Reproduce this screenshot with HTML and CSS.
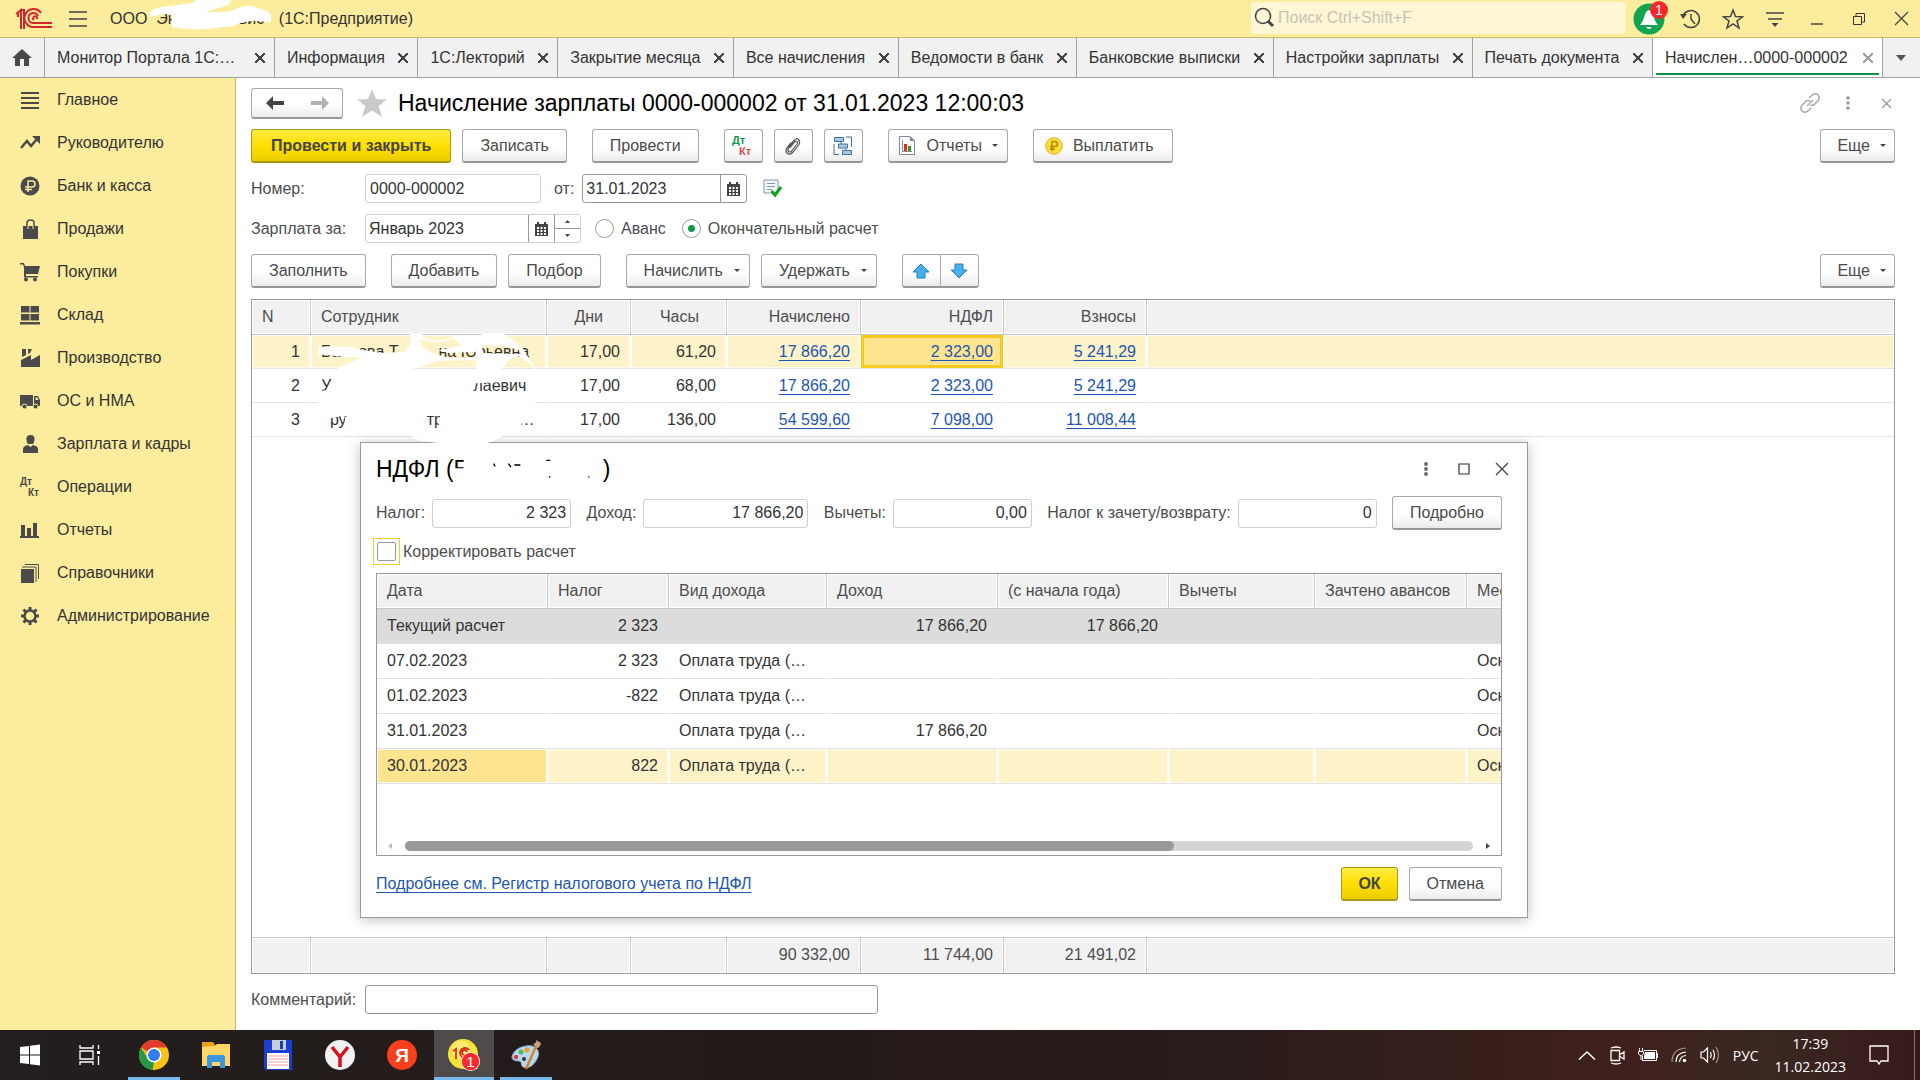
FILE: index.html
```html
<!DOCTYPE html>
<html lang="ru">
<head>
    <meta charset="utf-8">
    <title>Начисление зарплаты</title>
    <link rel="stylesheet" href="styles.css">
</head>
<body>

<div class="titlebar">
    <svg class="logo" width="38" height="22" viewBox="0 0 38 22" fill="none" stroke="#d8232a" stroke-width="2">
        <path d="M1 6 L6 2 V21 M3 9 V5 M9 1 V21 M5 2 H9"/>
        <path d="M26 5 A9 9 0 1 0 19 19 H37 M23 8 A5 5 0 1 0 19 15 H37 M22 11 A2 2 0 1 0 19 12"/>
    </svg>
    <button class="icon-btn" aria-label="Меню">
        <svg width="18" height="16" viewBox="0 0 18 16" stroke="#444" stroke-width="1.5"><path d="M0 1H18M0 8H18M0 15H18"/></svg>
    </button>
    <span class="app-name">ООО  Эн              вис"  (1С:Предприятие)</span>
    <label class="search">
        <svg width="20" height="21" viewBox="0 0 20 21" fill="none" stroke="#444"><circle cx="9" cy="9" r="7.5" stroke-width="1.5"/><path d="M14 14L19 19" stroke-width="3"/></svg>
        <input type="text" placeholder="Поиск Ctrl+Shift+F">
    </label>
    <div class="title-buttons">
        <button class="icon-btn bell" aria-label="Уведомления">
            <svg width="32" height="32" viewBox="0 0 32 32"><circle cx="16" cy="16" r="15.5" fill="#12a451"/><path d="M16 7c-5 1-4 10-9 15H25C20 17 21 8 16 7zM13 24H19Q16 28 13 24z" fill="#fff"/></svg>
            <span class="badge">1</span>
        </button>
        <button class="icon-btn" aria-label="История">
            <svg width="22" height="22" viewBox="0 0 22 22" fill="none" stroke="#444" stroke-width="1.5"><path d="M3 8A8.500 8.500 0 1 1 4 16"/><path d="M11 6V11L15 16"/><path d="M0 6L7 6L3 11z" fill="#444" stroke="none"/></svg>
        </button>
        <button class="icon-btn" aria-label="Избранное">
            <svg width="22" height="22" viewBox="0 0 22 22" fill="none" stroke="#444" stroke-width="1.500"><path d="M11 2L13.500 8.500L20.500 8.800L15 13L17 20L11 16L5 20L7 13L1.500 8.800L8.500 8.500z"/></svg>
        </button>
        <button class="icon-btn" aria-label="Сервис">
            <svg width="20" height="20" viewBox="0 0 20 20" stroke="#444" stroke-width="1.500"><path d="M1 4H19M3 10H17"/><path d="M6.500 14H13.500L10 18z" fill="#444" stroke="none"/></svg>
        </button>
        <button class="icon-btn" aria-label="Свернуть">
            <svg width="12" height="12" viewBox="0 0 12 12" stroke="#444" stroke-width="1.500"><path d="M0 11H12"/></svg>
        </button>
        <button class="icon-btn" aria-label="Развернуть">
            <svg width="12" height="12" viewBox="0 0 12 12" fill="none" stroke="#333"><path d="M.5 3.500H8.500V11.500H.5zM3 3.500V.5H11.500V9H8.500"/></svg>
        </button>
        <button class="icon-btn" aria-label="Закрыть">
            <svg width="13" height="13" viewBox="0 0 13 13" stroke="#444" stroke-width="1.300"><path d="M0 0L13 13M13 0L0 13"/></svg>
        </button>
    </div>
    <!-- white paint over the company name -->
    <svg class="paint paint-title" width="290" height="38" viewBox="0 0 870 114" fill="#fff">
        <path d="M448 50 Q446 28 480 22 L575 10 L590 0 H692 Q696 12 670 20 L615 36 Q690 40 716 24 Q745 10 775 24 L808 36 Q816 50 812 66 L760 62 Q715 68 700 78 L620 87 Q560 90 516 82 Q510 60 520 46 L500 42 Z"/>
    </svg>
</div>

<div class="tabs">
    <button class="tab-home" aria-label="Начальная страница">
        <svg width="20" height="17" viewBox="0 0 20 17" fill="#4a4a4a"><path d="M10 0L20 9H17V17H12V10H8V17H3V9H0z"/></svg>
    </button>
    <div class="tab tab-wide"><span>Монитор Портала 1С:…</span><button class="tab-x" aria-label="Закрыть"></button></div>
    <div class="tab"><span>Информация</span><button class="tab-x" aria-label="Закрыть"></button></div>
    <div class="tab"><span>1С:Лекторий</span><button class="tab-x" aria-label="Закрыть"></button></div>
    <div class="tab"><span>Закрытие месяца</span><button class="tab-x" aria-label="Закрыть"></button></div>
    <div class="tab"><span>Все начисления</span><button class="tab-x" aria-label="Закрыть"></button></div>
    <div class="tab"><span>Ведомости в банк</span><button class="tab-x" aria-label="Закрыть"></button></div>
    <div class="tab"><span>Банковские выписки</span><button class="tab-x" aria-label="Закрыть"></button></div>
    <div class="tab"><span>Настройки зарплаты</span><button class="tab-x" aria-label="Закрыть"></button></div>
    <div class="tab"><span>Печать документа</span><button class="tab-x" aria-label="Закрыть"></button></div>
    <div class="tab tab-wide tab-active"><span>Начислен…0000-000002</span><button class="tab-x" aria-label="Закрыть"></button></div>
    <button class="tab-more" aria-label="Все вкладки"><svg width="10" height="6" viewBox="0 0 10 6" fill="#555"><path d="M0 0H10L5 6z"/></svg></button>
</div>

<div class="workspace">
<nav class="sidebar">
    <a href="#"><svg viewBox="0 0 20 20" stroke="#4a4a4a" stroke-width="2.200"><path d="M1 3H19M1 8H19M1 13H19M1 18H19"/></svg>Главное</a>
    <a href="#"><svg viewBox="0 0 20 20" fill="none" stroke="#4a4a4a" stroke-width="2.500"><path d="M1 15L7 8L11 13L17 6"/><path d="M12 3H20V11z" fill="#4a4a4a" stroke="none"/></svg>Руководителю</a>
    <a href="#"><svg viewBox="0 0 20 20" fill="none" stroke="#fbec9e" stroke-width="1.500"><circle cx="10" cy="10" r="9.500" fill="#4a4a4a" stroke="none"/><path d="M8 16V5H12A3 3 0 0 1 12 11H5M5 13.500H12"/></svg>Банк и касса</a>
    <a href="#"><svg viewBox="0 0 20 20" fill="none" stroke="#4a4a4a" stroke-width="1.500"><path d="M3 7H18V20H3z" fill="#4a4a4a" stroke="none"/><path d="M7 8V4Q7 1 10.500 1T14 4V8"/><path d="M8 7V10M13 7V10" stroke="#fbec9e" stroke-width="1"/></svg>Продажи</a>
    <a href="#"><svg viewBox="0 0 20 20" fill="#4a4a4a"><path d="M0 1H4L5 4H20L18 12H6V14H18V15.500H4V5L3 2.500H0z"/><circle cx="6" cy="17.500" r="2"/><circle cx="15" cy="17.500" r="2"/></svg>Покупки</a>
    <a href="#"><svg viewBox="0 0 20 20" fill="#4a4a4a"><path d="M1 1H9.500V7.500H1zM10.500 1H19V7.500H10.500zM1 9H9.500V15.500H1zM10.500 9H19V15.500H10.500zM0 17H20V19.500H0z"/></svg>Склад</a>
    <a href="#"><svg viewBox="0 0 20 20" fill="#4a4a4a"><path d="M1 12L11 7V12L20 7V19H1zM2 1H6V7L2 9zM8 1H12L10 5L8 6z"/></svg>Производство</a>
    <a href="#"><svg viewBox="0 0 20 20" fill="#4a4a4a"><path d="M0 4H13V15H0z"/><path d="M14 5H18L20 9V15H14z"/><path d="M15.500 6.500H17.500L18.500 9H15.500z" fill="#fbec9e"/><circle cx="4.500" cy="15.500" r="2.500" stroke="#fbec9e"/><circle cx="15.500" cy="15.500" r="2.500" stroke="#fbec9e"/></svg>ОС и НМА</a>
    <a href="#"><svg viewBox="0 0 20 20" fill="#4a4a4a"><path d="M10.500 1C16 1 15 7 13 10H8C6 7 5 1 10.500 1zM3 19V15Q3 12 8 11L10.500 13L13 11Q18 12 18 15V19z"/></svg>Зарплата и кадры</a>
    <a href="#"><svg viewBox="0 0 20 20" fill="#4a4a4a" font-size="10" font-weight="bold"><text x="0" y="8">Дт</text><text x="8" y="19">Кт</text></svg>Операции</a>
    <a href="#"><svg viewBox="0 0 20 20" fill="#4a4a4a"><path d="M1 16V5H5V16H7V8H11V16H13V3H17V16H19V18H0V16z"/></svg>Отчеты</a>
    <a href="#"><svg viewBox="0 0 20 20" fill="none" stroke="#4a4a4a"><path d="M1 6H14V20H1z" fill="#4a4a4a" stroke="none"/><path d="M2 4H16V19M5 1.500H18.500V16"/></svg>Справочники</a>
    <a href="#"><svg viewBox="0 0 20 20" fill="none" stroke="#4a4a4a"><circle cx="10" cy="10" r="5.500" stroke-width="2.500"/><path d="M10 1V4M10 16V19M1 10H4M16 10H19M3.500 3.500L6 6M14 14L16.500 16.500M3.500 16.500L6 14M14 6L16.500 3.500" stroke-width="3"/></svg>Администрирование</a>
</nav>

<main class="main">
    <div class="form-head">
        <div class="btn-pair">
            <button class="btn" aria-label="Назад"><svg width="18" height="14" viewBox="0 0 18 14" fill="#444"><path d="M0 7L7 0V5H18V9H7V14z"/></svg></button>
            <button class="btn" aria-label="Вперед"><svg width="18" height="14" viewBox="0 0 18 14" fill="#b0b0b0"><path d="M18 7L11 0V5H0V9H11V14z"/></svg></button>
        </div>
        <svg class="star" width="30" height="28" viewBox="0 0 30 28" fill="#c9cacc"><path d="M15 0L19 10L30 10.500L21.500 17L25 28L15 21.500L5 28L8.500 17L0 10.500L11 10z"/></svg>
        <h1>Начисление зарплаты 0000-000002 от 31.01.2023 12:00:03</h1>
        <div class="form-tools">
            <button class="icon-btn" aria-label="Ссылка"><svg width="20" height="20" viewBox="0 0 20 20" fill="none" stroke="#aaa" stroke-width="1.500"><path d="M9 5L13 1.500Q16 0 18 2T18.500 7L14.500 11.500Q12 13 10 12M11 15L7 18.500Q4 20 2 18T1.500 13L5.500 8.500Q8 7 10 8M7 13L13 7"/></svg></button>
            <button class="icon-btn" aria-label="Действия"><svg width="4" height="14" viewBox="0 0 4 14" fill="#999"><circle cx="2" cy="2" r="1.800"/><circle cx="2" cy="7" r="1.800"/><circle cx="2" cy="12" r="1.800"/></svg></button>
            <button class="icon-btn" aria-label="Закрыть"><svg width="9" height="9" viewBox="0 0 9 9" stroke="#999" stroke-width="1.300"><path d="M0 0L9 9M9 0L0 9"/></svg></button>
        </div>
    </div>

    <div class="commands">
        <button class="btn btn-main btn-post">Провести и закрыть</button>
        <button class="btn">Записать</button>
        <button class="btn btn-group">Провести</button>
        <button class="btn btn-icon btn-group" aria-label="Дт Кт"><svg width="22" height="20" viewBox="0 0 22 20" font-size="11" font-weight="bold"><text x="0" y="8" fill="#0f9a4c">Дт</text><text x="7" y="19" fill="#e04848">Кт</text></svg></button>
        <button class="btn btn-icon" aria-label="Файлы"><svg width="18" height="20" viewBox="0 0 18 20" fill="none" stroke="#555" stroke-width="1.200"><path d="M5.500 12L10.500 6Q12 4.500 13 5.500T13 8L8 14.500Q6 17 4.500 15.500T4.500 11.500L10 4.500Q12.500 1.500 14.500 3.500T15 8.500L9 16Q6 19.500 3.500 17.500T2.500 12.500L7 6.500"/></svg></button>
        <button class="btn btn-icon" aria-label="Структура"><svg width="20" height="20" viewBox="0 0 20 20" fill="#a9c7dc" stroke="#3f75a0"><path d="M1.500 1.500H10.500V5.500H1.500zM5.500 8H14.500V12H5.500zM9.500 14.500H18.500V18.500H9.500z"/><path d="M13 1H18.500V11M1 8V18.500H6M8 6V8M13 12V14" fill="none"/></svg></button>
        <button class="btn btn-group btn-reports"><svg width="16" height="19" viewBox="0 0 16 19"><path d="M.5.5H11L15.500 5V18.500H.5z" fill="#fff" stroke="#7a8a99"/><path d="M11 0V5H16z" fill="#7a8a99"/><path d="M3.500 4V15.500H13" fill="none" stroke="#888"/><path d="M5 8H8V15H5z" fill="#e03020"/><path d="M9 10H12V15H9z" fill="#3a9a20"/></svg>Отчеты<i class="caret"></i></button>
        <button class="btn btn-group btn-pay"><svg width="18" height="18" viewBox="0 0 18 18" fill="none" stroke="#b58a00" stroke-width="1.500"><circle cx="9" cy="9" r="8.300" fill="#fcdc3c" stroke="#e3b320" stroke-width="1"/><path d="M7 14V4.500H10A2.500 2.500 0 0 1 10 9.500H5M5 12H10"/></svg>Выплатить</button>
        <button class="btn btn-more">Еще<i class="caret"></i></button>
    </div>

    <div class="fields">
        <label class="lbl" for="num">Номер:</label>
        <input class="inp inp-num" id="num" type="text" value="0000-000002">
        <label class="lbl-from" for="date">от:</label>
        <div class="combo combo-dark">
            <input id="date" class="inp-date" type="text" value="31.01.2023">
            <button class="cal" aria-label="Календарь"><svg width="13" height="14" viewBox="0 0 13 14" fill="#444"><path d="M0 2H2V0H4V2H9V0H11V2H13V14H0z"/><path d="M2 5H4V7H2zM5.500 5H7.500V7H5.500zM9 5H11V7H9zM2 8H4V10H2zM5.500 8H7.500V10H5.500zM9 8H11V10H9zM2 11H4V13H2zM5.500 11H7.500V13H5.500zM9 11H11V13H9z" fill="#fff"/></svg></button>
        </div>
        <svg class="posted" width="19" height="19" viewBox="0 0 19 19" fill="none"><path d="M1 1H15V14H1z" fill="#f4f7fb" stroke="#8295b5"/><path d="M4 4.500H12M4 7.500H12M4 10.500H9" stroke="#8295b5"/><path d="M8.500 12L12 16L18 8" stroke="#15a01c" stroke-width="3"/></svg>
    </div>

    <div class="fields">
        <label class="lbl" for="month">Зарплата за:</label>
        <div class="combo">
            <input id="month" class="inp-month" type="text" value="Январь 2023">
            <button class="cal" aria-label="Календарь"><svg width="13" height="14" viewBox="0 0 13 14" fill="#444"><path d="M0 2H2V0H4V2H9V0H11V2H13V14H0z"/><path d="M2 5H4V7H2zM5.500 5H7.500V7H5.500zM9 5H11V7H9zM2 8H4V10H2zM5.500 8H7.500V10H5.500zM9 8H11V10H9zM2 11H4V13H2zM5.500 11H7.500V13H5.500zM9 11H11V13H9z" fill="#fff"/></svg></button>
            <div class="spin">
                <button aria-label="Больше"><svg width="5" height="3" viewBox="0 0 5 3" fill="#444"><path d="M0 3H5L2.500 0z"/></svg></button>
                <button aria-label="Меньше"><svg width="5" height="3" viewBox="0 0 5 3" fill="#444"><path d="M0 0H5L2.500 3z"/></svg></button>
            </div>
        </div>
        <label class="radio"><input type="radio" name="kind">Аванс</label>
        <label class="radio"><input type="radio" name="kind" checked>Окончательный расчет</label>
    </div>

    <div class="commands">
        <button class="btn">Заполнить</button>
        <button class="btn btn-group">Добавить</button>
        <button class="btn">Подбор</button>
        <button class="btn btn-group btn-drop">Начислить<i class="caret"></i></button>
        <button class="btn btn-drop">Удержать<i class="caret"></i></button>
        <div class="btn-pair btn-group">
            <button class="btn" aria-label="Вверх"><svg width="18" height="16" viewBox="0 0 18 16" fill="#45b0ee" stroke="#2a7fb5"><path d="M9 1L17 9H13V15H5V9H1z"/></svg></button>
            <button class="btn" aria-label="Вниз"><svg width="18" height="16" viewBox="0 0 18 16" fill="#45b0ee" stroke="#2a7fb5"><path d="M9 15L17 7H13V1H5V7H1z"/></svg></button>
        </div>
        <button class="btn btn-more">Еще<i class="caret"></i></button>
    </div>

    <div class="grid-box">
    <table class="grid">
        <colgroup><col class="c-n"><col class="c-name"><col class="c-days"><col class="c-hours"><col class="c-acc"><col class="c-tax"><col class="c-tax"><col></colgroup>
        <thead>
            <tr><th>N</th><th>Сотрудник</th><th class="num-wide">Дни</th><th class="num-wide">Часы</th><th class="num">Начислено</th><th class="num">НДФЛ</th><th class="num">Взносы</th><th></th></tr>
        </thead>
        <tbody>
            <tr class="current"><td class="num">1</td><td class="who">Ба    ова Т         на Юрьевна</td><td class="num">17,00</td><td class="num">61,20</td><td class="num"><a href="#">17 866,20</a></td><td class="num picked"><a href="#">2 323,00</a></td><td class="num"><a href="#">5 241,29</a></td><td></td></tr>
            <tr><td class="num">2</td><td class="who">У                                лаевич</td><td class="num">17,00</td><td class="num">68,00</td><td class="num"><a href="#">17 866,20</a></td><td class="num"><a href="#">2 323,00</a></td><td class="num"><a href="#">5 241,29</a></td><td></td></tr>
            <tr><td class="num">3</td><td class="who">  ру                  тр                 …</td><td class="num">17,00</td><td class="num">136,00</td><td class="num"><a href="#">54 599,60</a></td><td class="num"><a href="#">7 098,00</a></td><td class="num"><a href="#">11 008,44</a></td><td></td></tr>
            <tr class="filler"><td colspan="8"></td></tr>
        </tbody>
        <tfoot>
            <tr><td></td><td></td><td></td><td></td><td class="num">90 332,00</td><td class="num">11 744,00</td><td class="num">21 491,02</td><td></td></tr>
        </tfoot>
    </table>
    </div>

    <div class="fields">
        <label class="lbl" for="comment">Комментарий:</label>
        <input class="inp inp-comment" id="comment" type="text">
    </div>

    <section class="dialog" role="dialog">
        <div class="dialog-head">
            <h2>НДФЛ (Б                     )</h2>
            <button class="icon-btn" aria-label="Действия"><svg width="4" height="14" viewBox="0 0 4 14" fill="#666"><circle cx="2" cy="2" r="1.900"/><circle cx="2" cy="7" r="1.900"/><circle cx="2" cy="12" r="1.900"/></svg></button>
            <button class="icon-btn" aria-label="Развернуть"><svg width="12" height="12" viewBox="0 0 12 12" fill="none" stroke="#333" stroke-width="1.200"><path d="M1 1H11V11H1z"/></svg></button>
            <button class="icon-btn" aria-label="Закрыть"><svg width="14" height="14" viewBox="0 0 14 14" stroke="#444" stroke-width="1.300"><path d="M1 1L13 13M13 1L1 13"/></svg></button>
        </div>
        <div class="dialog-fields">
            <label>Налог: <input class="inp inp-s" type="text" value="2 323"></label>
            <label>Доход: <input class="inp inp-m" type="text" value="17 866,20"></label>
            <label>Вычеты: <input class="inp inp-s" type="text" value="0,00"></label>
            <label>Налог к зачету/возврату: <input class="inp inp-s" type="text" value="0"></label>
            <button class="btn">Подробно</button>
        </div>
        <label class="check"><span><input type="checkbox"></span>Корректировать расчет</label>

        <div class="sub-box">
        <table class="grid sub">
            <colgroup><col class="d-date"><col class="d-tax"><col class="d-kind"><col class="d-sum"><col class="d-sum"><col class="d-ded"><col class="d-adv"><col class="d-place"></colgroup>
            <thead>
                <tr><th>Дата</th><th>Налог</th><th>Вид дохода</th><th>Доход</th><th>(с начала года)</th><th>Вычеты</th><th>Зачтено авансов</th><th>Место</th></tr>
            </thead>
            <tbody>
                <tr class="total"><td>Текущий расчет</td><td class="num">2 323</td><td></td><td class="num">17 866,20</td><td class="num">17 866,20</td><td></td><td></td><td></td></tr>
                <tr><td>07.02.2023</td><td class="num">2 323</td><td>Оплата труда (…</td><td></td><td></td><td></td><td></td><td>Основное</td></tr>
                <tr><td>01.02.2023</td><td class="num">-822</td><td>Оплата труда (…</td><td></td><td></td><td></td><td></td><td>Основное</td></tr>
                <tr><td>31.01.2023</td><td></td><td>Оплата труда (…</td><td class="num">17 866,20</td><td></td><td></td><td></td><td>Основное</td></tr>
                <tr class="current"><td class="picked-plain">30.01.2023</td><td class="num">822</td><td>Оплата труда (…</td><td></td><td></td><td></td><td></td><td>Основное</td></tr>
            </tbody>
        </table>
        <div class="scroll">
            <svg width="4" height="6" viewBox="0 0 4 6" fill="#bbb"><path d="M4 0V6L0 3z"/></svg>
            <div class="track"><div class="thumb"></div></div>
            <svg width="4" height="6" viewBox="0 0 4 6" fill="#444"><path d="M0 0V6L4 3z"/></svg>
        </div>
        </div>

        <div class="dialog-foot">
            <a href="#">Подробнее см. Регистр налогового учета по НДФЛ</a>
            <button class="btn btn-main">ОК</button>
            <button class="btn">Отмена</button>
        </div>
    </section>

    <!-- white paint over the names -->
    <svg class="paint paint-names" width="310" height="160" viewBox="0 0 930 480" fill="#fff">
        <path fill-rule="evenodd" d="M40 65H130L170 74L230 84L300 80L318 58L315 26H351L353 36Q400 58 445 34L530 30V26H598L650 66L690 128L690 160L660 168L480 176V205L690 215V240L510 260L440 262L400 270L350 262L320 300L310 262H250L190 268L160 272L120 270L70 282L40 272L45 200L80 190L78 160L100 128L168 98L130 96L40 88z
            M345 44Q400 62 445 38L470 62L400 76L430 84L512 80V100L430 98L380 84L350 64z
            M532 60L600 64L640 74L650 88L532 84z
            M400 108L512 104V132H323z
            M620 98L642 94L684 124V132H590z"/>
        <path d="M120 275L160 282V310L120 305zM185 270H280V310H235L232 296H185zM315 270H350V300L345 310H310zM405 270L440 268L470 275L570 285V305L600 330Q560 350 545 356H425Q340 350 318 336L330 312H400zM575 265H680V282H650V310H580z"/>
        <path d="M40 180L46 150H52V240H40z"/>
        <path d="M444 430H482V470H444zM476 395H560V470H476z"/>
        <g stroke="#000" stroke-width="4"><path d="M566 416L570 424M610 416L618 426M628 420H646M724 406H736M732 456H736M850 456H853"/></g>
    </svg>
</main>
</div>

<footer class="taskbar">
    <button class="task" aria-label="Пуск"><svg width="20" height="22" viewBox="0 0 20 22" fill="#fff"><path d="M0 3L9 2V10.500H0zM10 1.800L20 .5V10.500H10zM0 11.500H9V20L0 19zM10 11.500H20V21.500L10 20.200z"/></svg></button>
    <button class="task" aria-label="Представление задач"><svg width="22" height="20" viewBox="0 0 22 20" fill="none" stroke="#fff" stroke-width="1.300"><path d="M1 0V3H14V0M1 6H14V14H1zM1 20V17H14V20M19.500 0V4M19.500 11V20"/><path d="M18 6H21V9H18z" fill="#fff" stroke="none"/></svg></button>
    <div class="apps">
    <button class="task run" aria-label="Chrome"><svg width="30" height="30" viewBox="0 0 30 30"><circle cx="15" cy="15" r="15" fill="#f9c116"/><path d="M15 15L2 7.500A15 15 0 0 1 28 7.500H15z" fill="#e23b2e"/><path d="M2 7.500L9 19L15 22L13.500 30A15 15 0 0 1 2 7.500z" fill="#279847"/><circle cx="15" cy="15" r="7.500" fill="#fff"/><circle cx="15" cy="15" r="6" fill="#2f7df0"/></svg></button>
    <button class="task" aria-label="Проводник"><svg width="28" height="26" viewBox="0 0 28 26"><path d="M0 0H11L13 3H28V24H0z" fill="#e8a317"/><path d="M0 5L13 4L15 2H28V24H0z" fill="#ffd667"/><path d="M5 26V15Q5 13 7 13H21Q23 13 23 15V26H18V20H10V26z" fill="#3a96dd"/></svg></button>
    <button class="task" aria-label="Total Commander"><svg width="28" height="30" viewBox="0 0 28 30"><path d="M0 0H28V30H2L0 28z" fill="#1a3fd0"/><path d="M8 0H22V10H8z" fill="#c8ccd8"/><path d="M16 1H19V9H16z" fill="#1a3fa0"/><path d="M3 13H25V29H3z" fill="#fff"/><path d="M4 16H24M4 19H24M4 22H24M4 25H24" stroke="#f0a0a0"/></svg></button>
    <button class="task" aria-label="Яндекс Браузер"><svg width="30" height="30" viewBox="0 0 30 30"><circle cx="15" cy="15" r="15" fill="#f2f2f2"/><path d="M7 7L15 17L23 7M15 16V27" fill="none" stroke="#d8101c" stroke-width="3.500"/></svg></button>
    <button class="task" aria-label="Яндекс"><svg width="30" height="30" viewBox="0 0 30 30"><circle cx="15" cy="15" r="15" fill="#fc3f1d"/><text x="15" y="22" text-anchor="middle" font-size="19" font-weight="bold" fill="#fff">Я</text></svg></button>
    <button class="task run active" aria-label="1С"><svg width="32" height="32" viewBox="0 0 32 32"><circle cx="15" cy="15" r="15" fill="#fbe23a"/><circle cx="13" cy="11" r="9" fill="#fdf08a" opacity=".7"/><path d="M5 12L8 10V20M21 11A5 5 0 1 0 17 19H22M19 13A2.500 2.500 0 1 0 17 16H22" fill="none" stroke="#e0301e" stroke-width="1.800"/><circle cx="22.500" cy="22.500" r="9.500" fill="#fff"/><circle cx="22.500" cy="22.500" r="8.700" fill="#fb2a2e"/><text x="22.500" y="28" text-anchor="middle" font-size="15" fill="#fff">1</text></svg></button>
    <button class="task run" aria-label="Paint"><svg width="30" height="30" viewBox="0 0 30 30"><path d="M15 6C26 4 30 12 26 19C22 27 16 29 12 27C9 25 12 22 8 21C4 21 1 20 1 17C2 11 8 7 15 6z" fill="#b5d9ee" stroke="#7fa8c4"/><circle cx="5" cy="17" r="2.200" fill="#e23a3a"/><circle cx="10" cy="12" r="2.500" fill="#4fb35a"/><circle cx="16" cy="10" r="2.500" fill="#f0a020"/><circle cx="13" cy="19" r="2" fill="#333"/><path d="M26 4L15 29" stroke="#d98324" stroke-width="2.500"/><path d="M22 4Q26 3 25 0L30 3Q29 8 26 8z" fill="#c9a077"/></svg></button>
    </div>
    <div class="tray">
        <svg class="tray-up" width="16" height="9" viewBox="0 0 16 9" fill="none" stroke="#fff" stroke-width="1.500"><path d="M0 8.500L8 1L16 8.500"/></svg>
        <svg width="15" height="19" viewBox="0 0 15 19" fill="none" stroke="#fff" stroke-width="1.300"><path d="M1 4.500H9.500V14.500H1zM10 8.500L14 6V13L10 10.500M1 2Q6 0 11 2M1 17Q6 19 11 17"/></svg>
        <svg width="20" height="14" viewBox="0 0 20 14" fill="none" stroke="#fff"><path d="M6 2.500H18.500V12.500H4.500V8M19.500 5V10M1.500 0V3M4.500 0V3M.5 3.500H5.500V6L3 8L.5 6zM3 8V12"/><path d="M7 4H17V11H6V8z" fill="#fff" stroke="none"/></svg>
        <svg width="16" height="16" viewBox="0 0 16 16" fill="none" stroke="#fff" stroke-width="1.200"><path d="M1 15Q1 2 15 1" opacity=".5"/><path d="M5 15Q5 6 15 5M8.500 15Q9 9 15 8.500"/><circle cx="13.500" cy="13.500" r="1.800" fill="#fff" stroke="none"/></svg>
        <svg width="20" height="18" viewBox="0 0 20 18" fill="none" stroke="#fff" stroke-width="1.200"><path d="M1 6H3.500L7.500 2V16L3.500 12H1zM10.500 6Q12 9 10.500 12M13 4Q16 9 13 14"/><path d="M16 1Q21 9 16 17" opacity=".5"/></svg>
        <span>РУС</span>
        <div class="clock">17:39<br>11.02.2023</div>
        <svg width="20" height="20" viewBox="0 0 20 20" fill="none" stroke="#fff" stroke-width="1.300"><path d="M1 1H19V16H12L10 19L8 16H1z"/></svg>
    </div>
</footer>

</body>
</html>
```
FILE: styles.css
```css
* {margin: 0; padding: 0; box-sizing: border-box;}

body {
    display: flex;
    flex-direction: column;
    height: 100vh;
    overflow: hidden;
    background: #fff;
    color: #333;
    font: 16px/20px "Liberation Sans", Arial, sans-serif;
}
button, input {font: inherit; color: inherit;}
button {border: 0; background: none; white-space: nowrap;}
svg {display: block; flex: none; overflow: visible;}
a {color: #1d56b0; text-underline-offset: 3px;}

/* title bar */
.titlebar {
    position: relative;
    display: flex;
    align-items: center;
    height: 38px;
    padding: 0 6px 0 15px;
    background: #fbec9e;
    border-bottom: 1px solid #c8b965;
}
.icon-btn {display: flex; align-items: center; justify-content: center; width: 26px; height: 26px; flex: none;}
.titlebar > .icon-btn {margin-left: 12px;}
.app-name {margin-left: 19px; white-space: pre;}
.search {
    display: flex;
    align-items: center;
    gap: 4px;
    width: 375px;
    height: 32px;
    margin: 0 10px 2px auto;
    padding-left: 3px;
    border-radius: 3px;
    background: #fef6d4;
}
.search input {flex: 1; border: 0; background: none; outline: 0;}
.search input::placeholder {color: #c6c4b8;}
.title-buttons {display: flex; gap: 16px;}
.bell {position: relative;}
.badge {
    position: absolute;
    left: 14px;
    top: -5px;
    width: 18px;
    height: 18px;
    border-radius: 50%;
    background: #f9262c;
    color: #fff;
    font-size: 14px;
    line-height: 18px;
}

/* tabs */
.tabs {display: flex; height: 40px; background: #f1f1f1; border-bottom: 1px solid #a0a0a0;}
.tab-home {display: flex; flex: none; align-items: center; justify-content: center; width: 45px; border-right: 1px solid #a0a0a0;}
.tab {
    display: flex;
    flex: 1 1 auto;
    align-items: center;
    justify-content: space-between;
    gap: 9px;
    padding: 0 9px 0 12px;
    border-right: 1px solid #a0a0a0;
    white-space: nowrap;
}
.tab-wide {flex: none; width: 230px;}
.tab-x {
    width: 10px;
    height: 10px;
    background: linear-gradient(45deg, transparent 43%, #444 43%, #444 57%, transparent 57%),
                linear-gradient(-45deg, transparent 43%, #444 43%, #444 57%, transparent 57%);
}
.tab-active {position: relative; background: #fff;}
.tab-active .tab-x {opacity: .5;}
.tab-active::after {content: ""; position: absolute; left: 3px; right: 3px; bottom: 2px; height: 2px; background: #0b9444;}
.tab-more {display: flex; flex: none; width: 37px; align-items: center; justify-content: center;}

/* sections */
.workspace {display: flex; flex: 1; min-height: 0;}
.sidebar {width: 236px; flex: none; background: #fbec9e; border-right: 1px solid #c8b965;}
.sidebar a {display: flex; align-items: center; gap: 17px; height: 43px; padding-left: 20px; color: #333; text-decoration: none;}
.sidebar svg {width: 20px; height: 20px;}

/* form */
.main {position: relative; display: flex; flex: 1; flex-direction: column; gap: 11px; padding: 10px 25px 16px 15px; min-width: 0;}
.form-head {display: flex; align-items: center; height: 30px;}
.form-head h1 {margin-left: 11px; font-size: 23px; font-weight: normal; color: #000; white-space: nowrap;}
.star {margin-left: 14px;}
.form-tools {display: flex; gap: 12px; margin: 0 -4px 0 auto;}

.btn {
    display: flex;
    align-items: center;
    justify-content: center;
    height: 34px;
    padding: 0 17px;
    border: 1px solid #a9a9a9;
    border-bottom: 2px solid #979797;
    border-radius: 3px;
    background: linear-gradient(#fff 55%, #ececec);
    color: #4a4a4a;
}
.btn-main {
    padding: 0 16px;
    border-color: #a99a12;
    background: linear-gradient(#ffea45, #ffe000 50%, #ebcd00);
    color: #444;
    font-weight: bold;
}
.btn-post {padding: 0 19px;}
.btn-icon {width: 39px; padding: 0;}
.btn-pair {display: flex;}
.btn-pair .btn {width: 39px; padding: 0;}
.btn-pair .btn:first-child {border-radius: 3px 0 0 3px;}
.btn-pair .btn:last-child {margin-left: -1px; border-radius: 0 3px 3px 0;}
.form-head .btn-pair .btn {width: 46px; height: 31px;}
.form-head .btn-pair .btn:first-child {width: 47px; border-right-color: #ddd;}
.form-head .btn-pair .btn:last-child {border-left: 0;}
.commands {display: flex; gap: 11px;}
.btn-group {margin-left: 14px;}
.btn-drop {padding: 0 9px 0 17px;}
.btn-reports {gap: 12px; padding: 0 9px 0 10px;}
.btn-reports .caret {margin-left: -2px;}
.btn-pay {gap: 10px; padding: 0 18px 0 11px;}
.btn-more {margin-left: auto; padding: 0 8px 0 16px;}
.caret {margin-left: 11px; border: 3px solid transparent; border-top-color: #444; border-bottom: 0;}
.btn-more .caret {margin-left: 10px;}

.fields {display: flex; align-items: center; height: 29px; color: #4d4d4d;}
.lbl {width: 114px;}
.inp, .combo {height: 29px; border: 1px solid #cfcfcf; border-radius: 3px; background: #fff; color: #333;}
.inp {padding: 0 4px;}
.inp-num {width: 176px;}
.inp-comment {width: 513px; border-color: #999;}
.lbl-from {margin: 0 8px 0 13px;}
.combo {display: flex;}
.combo input {border: 0; padding: 0 3px; background: none; outline: 0;}
.combo-dark {border-color: #999;}
.inp-date {width: 137px;}
.inp-month {width: 162px;}
.cal {display: flex; align-items: center; justify-content: center; width: 26px; border-left: 1px solid #999;}
.spin {display: flex; flex-direction: column; width: 26px; border-left: 1px solid #999;}
.spin button {display: flex; flex: 1; align-items: center; justify-content: center;}
.spin button + button {border-top: 1px solid #999;}
.posted {margin-left: 16px;}
.radio {display: flex; align-items: center; gap: 7px; margin-left: 14px;}
.radio + .radio {margin-left: 16px;}
.radio input {appearance: none; width: 19px; height: 19px; border: 1px solid #999; border-radius: 50%;}
.radio input:checked {background: radial-gradient(circle, #0b9a48 3px, #fff 4px);}

/* tables */
.grid-box {flex: 1; display: flex; border: 1px solid #999; min-height: 0;}
.grid {width: 100%; border-collapse: separate; border-spacing: 0; table-layout: fixed;}
.grid th, .grid td {padding: 0 10px; white-space: nowrap; text-align: left; font-weight: normal; overflow: hidden;}
.grid th {height: 35px; padding-bottom: 1px; border-right: 1px solid #c8c8c8; border-bottom: 1px solid #c8c8c8; background: #f1f1f1; box-shadow: inset 0 0 0 1px #fff; color: #4d4d4d;}
.grid td {height: 34px; border-bottom: 1px solid #e2e2e2; border-right: 1px solid transparent;}
.grid .num {text-align: right;}
.grid th.num-wide {text-align: right; padding-right: 27px;}
.grid th:last-child, .grid td:last-child {border-right: 0;}
.grid .current td {background: #fef2c8; border-right-color: #fff; box-shadow: inset 0 0 0 1px #fffaf0;}
.grid .current .picked {background: #ffe48f; box-shadow: inset 0 0 0 3px #f9cb20;}
.grid .current .picked-plain {background: #ffe48f;}
.grid .filler td {height: auto; border: 0;}
.grid tfoot td {height: 36px; padding-bottom: 2px; border-top: 1px solid #c8c8c8; border-right-color: #c8c8c8; border-bottom: 0; background: #f1f1f1; box-shadow: inset 0 0 0 1px #fff; color: #4d4d4d;}
.grid .who {white-space: pre;}
.c-n {width: 59px;}
.c-name {width: 236px;}
.c-days {width: 84px;}
.c-hours {width: 96px;}
.c-acc {width: 134px;}
.c-tax {width: 143px;}

/* tax window */
.dialog {
    position: absolute;
    left: 124px;
    top: 364px;
    width: 1168px;
    padding: 12px 25px 16px 15px;
    border: 1px solid #999;
    background: #fff;
    box-shadow: 0 2px 12px rgba(0, 0, 0, .25);
}
.dialog-head {display: flex; align-items: center; gap: 12px; height: 28px; margin-right: -13px;}
.dialog-head h2 {flex: 1; font-size: 23px; font-weight: normal; color: #000; white-space: pre;}
.dialog-fields {display: flex; align-items: center; justify-content: space-between; margin-top: 13px; color: #4d4d4d;}
.dialog-fields label {display: flex; align-items: center; gap: 7px;}
.dialog-fields .inp {text-align: right;}
.inp-s {width: 139px;}
.inp-m {width: 165px;}
.check {display: flex; align-items: center; gap: 3px; margin: 8px 0 8px -3px; color: #4d4d4d;}
.check span {padding: 3px; border: 1px solid #f9cb20;}
.check input {display: block; appearance: none; width: 19px; height: 19px; border: 1px solid #999; border-radius: 2px;}
.sub-box {display: flex; flex-direction: column; justify-content: space-between; height: 283px; border: 1px solid #999; overflow: hidden;}
.grid.sub {width: 1200px;}
.grid.sub td {height: 35px;}
.grid .total td {background: #dcdcdc;}
.d-date {width: 171px;}
.d-tax {width: 121px;}
.d-kind {width: 158px;}
.d-sum {width: 171px;}
.d-ded {width: 146px;}
.d-adv {width: 152px;}
.scroll {display: flex; align-items: center; gap: 13px; padding: 0 11px 4px;}
.track {flex: 1; height: 10px; border-radius: 5px; background: #d4d4d4;}
.thumb {width: 72%; height: 10px; border-radius: 5px; background: #999;}
.dialog-foot {display: flex; align-items: center; gap: 11px; margin-top: 11px;}
.dialog-foot a {margin-right: auto;}

/* painted over places */
.paint {position: absolute; pointer-events: none;}
.paint-title {left: 0; top: 0;}
.paint-names {left: 69px; top: 247px;}

/* taskbar */
.taskbar {
    display: flex;
    flex: none;
    height: 50px;
    background: linear-gradient(90deg, #231f1e, #241a1a 40%, #2a1c1a 65%, #40201c 85%, #3a2822 92%, #38191a);
    color: #fff;
    font: 14px/23px "Open Sans", "Noto Sans", sans-serif;
}
.task {position: relative; display: flex; align-items: center; justify-content: center; width: 60px;}
.task.run::after {content: ""; position: absolute; left: 4px; right: 4px; bottom: 0; height: 3px; background: #76b9ed;}
.task.active {background: #4f4b4a;}
.task.active::after {left: 0; right: 0;}
.task text {font-family: "Liberation Sans", Arial, sans-serif;}
.apps {display: flex; gap: 2px; margin-left: 4px;}
.tray {display: flex; align-items: center; gap: 13px; margin-left: auto; margin-right: 5px; padding-right: 25px; border-right: 1px solid #7d7472;}
.tray-up {margin-right: 2px;}
.clock {margin: 0 10px 0 3px; text-align: center;}
```
